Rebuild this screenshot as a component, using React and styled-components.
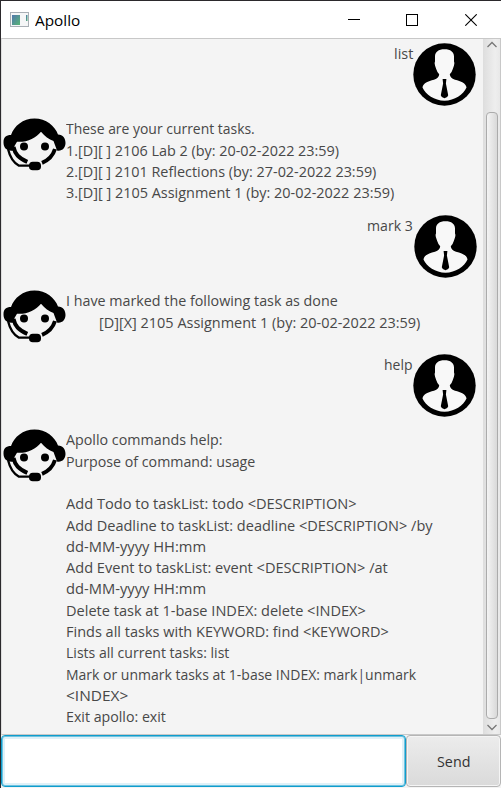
import React, { useLayoutEffect, useRef } from 'react';
import styled, { createGlobalStyle } from 'styled-components';

const Global = createGlobalStyle`
  * { box-sizing: border-box; }
  body { margin: 0; background: #fff; overflow: hidden; }
`;

const Window = styled.main`
  width: 501px;
  height: 788px;
  display: flex;
  flex-direction: column;
  border-top: 1px solid #2b292c;
  border-left: 1px solid #2b292c;
  background: #f4f4f4;
  font-family: 'Open Sans', 'Noto Sans', sans-serif;
  font-size: 15.2px;
  color: #484848;
`;

const TitleBar = styled.header`
  height: 37px;
  flex: none;
  display: flex;
  align-items: center;
  padding-left: 9px;
  background: #fff;
  color: #000;
`;

const AppIcon = styled.svg`
  width: 20px;
  height: 16px;
  flex: none;
  margin-right: 5px;
`;

const Title = styled.h1`
  margin: 0;
  flex: 1;
  font-size: 15px;
  font-weight: 400;
  line-height: 20px;
`;

const WindowButton = styled.button`
  width: 58px;
  height: 37px;
  padding: 0;
  border: 0;
  background: none;
  display: grid;
  place-items: center;

  &:last-child { margin-left: 1px; }
`;

const Controls = styled.div`
  display: flex;
  margin-right: 1px;
`;

const Body = styled.section`
  height: 697px;
  flex: none;
  display: flex;
  border: 1px solid #c8c8c8;
  border-left-color: #dedede;
`;

const Messages = styled.div`
  flex: 1;
  padding-top: 4px;
  min-width: 0;
`;

const Message = styled.article`
  display: flex;
  align-items: flex-start;
  height: ${(p) => p.$height}px;
  padding-left: 1px;
  padding-right: ${(p) => p.$inset || 7}px;
  justify-content: ${(p) => (p.$user ? 'flex-end' : 'flex-start')};
`;

const Lines = styled.div`
  display: flex;
  flex-direction: column;
  padding-top: 0.4px;
  margin-right: ${(p) => p.$gap || 0}px;
`;

const Line = styled.div`
  height: 21.3px;
  line-height: 21.3px;
  margin-left: ${(p) => p.$indent || 0}px;
  white-space: pre;
`;

const Fitted = styled.span`
  display: inline-block;
  width: ${(p) => p.$width}px;
  text-align: left;
  white-space: pre;
`;

const Glyphs = styled.span`
  display: inline-block;
  transform-origin: left center;
`;

const Avatar = styled.svg`
  width: 63px;
  height: 63px;
  flex: none;
  display: block;
`;

const ScrollBar = styled.div`
  width: 17px;
  flex: none;
  display: flex;
  flex-direction: column;
  align-items: center;
  border-left: 1px solid #dedede;
  background: linear-gradient(to right, #dfdfdf, #eee 70%, #e8e8e8);
`;

const ScrollArrow = styled.svg`
  width: 12px;
  height: 14px;
  flex: none;
`;

const Track = styled.div`
  flex: 1;
  width: 12px;
  padding-top: 59px;
  padding-bottom: 1px;
`;

const Thumb = styled.div`
  height: 100%;
  border: 1px solid #ababab;
  border-radius: 4px;
  background: linear-gradient(to right, #f4f4f4, #e9e9e9 40%, #d9d9d9);
`;

const InputBar = styled.footer`
  flex: 1;
  display: flex;
`;

const CommandInput = styled.input`
  width: 405px;
  height: 52px;
  border: 1.5px solid #0f9dcd;
  border-radius: 4px;
  outline: none;
  background: #fff;
  box-shadow: inset 0 0 0 1px #6fc3e0, inset 0 0 0 3px #dff1f8;
  padding: 0 10px;
  font: inherit;
`;

const SendButton = styled.button`
  width: 95px;
  height: 52px;
  padding: 0;
  border: 1px solid #b5b5b5;
  border-radius: 4px;
  box-shadow: inset 0 0 0 1px #f5f5f5;
  background: linear-gradient(#ececec, #dadada);
  color: #333;
  font: inherit;
  display: grid;
  place-items: center;
`;

/* Condenses a line of text so that it spans the given width. */
function FittedText({ text, width }) {
  const ref = useRef(null);
  useLayoutEffect(() => {
    const node = ref.current;
    const fit = () => {
      node.style.transform = `scaleX(${width / node.offsetWidth})`;
    };
    fit();
    document.fonts.ready.then(fit);
  }, [text, width]);
  return (
    <Fitted $width={width}>
      <Glyphs ref={ref}>{text}</Glyphs>
    </Fitted>
  );
}

function UserAvatar() {
  return (
    <Avatar viewBox="0 0 63 63" aria-label="User">
      <circle cx="31.5" cy="31.5" r="31.2" fill="#000" />
      <path
        fill="#f8f8f8"
        d="M31.5 6.3C25.5 6.3 22 9 22 13.5V18.5Q21.2 19.5 22 22.5L23.2 26Q24.2 29.5 26.2 31.2C26 34 24.5 35.5 21 36.7C15 38.3 10 40 9.5 44.5C12.5 51.5 21.5 57.7 31.5 57.7S50.5 51.5 53.5 44.5C53 40 48 38.3 42 36.7C38.5 35.5 37 34 36.8 31.2Q38.8 29.5 39.8 26L41 22.5Q41.8 19.5 41 18.5V13.5C41 9 37.5 6.3 31.5 6.3Z"
      />
      <path fill="#000" d="M29.6 36H33.4L32.9 40.5L35.2 52.2Q34.5 55 31.5 55.3Q28.5 55 27.8 52.2L30.1 40.5Z" />
    </Avatar>
  );
}

function AgentAvatar() {
  return (
    <Avatar viewBox="0 0 63 63" aria-label="Apollo">
      <path
        d="M8 17C11 8 20 .5 31.5 .5S52 8 55 16.5C60 17 62.5 20 62.5 25S59 33.5 54 32.5L50.5 23C46 21.5 41.5 18 38 13.7C33 20 24 24.5 14 23.8L11.5 28L10.5 32.5C4 33.5 .5 30 .5 24.5S3 17 8 17Z"
      />
      <g fill="none" stroke="#000">
        <path strokeWidth="4" d="M10.5 29C12 36 15.5 40 24.3 43.8M52 31C50 37.5 46 42 39 44.8" />
        <path strokeWidth="2.3" d="M5 31C7 39.5 11 45 16 47.7H27" />
      </g>
      <circle cx="21" cy="28.6" r="4" />
      <circle cx="42" cy="28.6" r="4" />
      <rect x="26" y="43.7" width="12" height="8.5" rx="3.8" />
    </Avatar>
  );
}

const conversation = [
  { user: true, height: 75, lines: [['list', 19]] },
  {
    height: 97,
    lines: [
      ['These are your current tasks.', 189],
      ['1.[D][ ] 2106 Lab 2 (by: 20-02-2022 23:59)', 273],
      ['2.[D][ ] 2101 Reflections (by: 27-02-2022 23:59)', 310],
      ['3.[D][ ] 2105 Assignment 1 (by: 20-02-2022 23:59)', 328],
    ],
  },
  { user: true, height: 75, inset: 6, gap: 1.5, lines: [['mark 3', 45.5]] },
  {
    height: 64,
    lines: [
      ['I have marked the following task as done', 272],
      ['[D][X] 2105 Assignment 1 (by: 20-02-2022 23:59)', 321, 33],
    ],
  },
  { user: true, height: 75, gap: 0.5, lines: [['help', 28.5]] },
  {
    height: 300,
    lines: [
      ['Apollo commands help:', 157],
      ['Purpose of command: usage', 189],
      ['', 0],
      ['Add Todo to taskList: todo <DESCRIPTION>', 290.5],
      ['Add Deadline to taskList: deadline <DESCRIPTION> /by', 367],
      ['dd-MM-yyyy HH:mm', 140.5],
      ['Add Event to taskList: event <DESCRIPTION> /at', 321.5],
      ['dd-MM-yyyy HH:mm', 140.5],
      ['Delete task at 1-base INDEX: delete <INDEX>', 300],
      ['Finds all tasks with KEYWORD: find <KEYWORD>', 323],
      ['Lists all current tasks: list', 163],
      ['Mark or unmark tasks at 1-base INDEX: mark|unmark', 350],
      ['<INDEX>', 62],
      ['Exit apollo: exit', 100],
    ],
  },
];

export default function App() {
  return (
    <Window>
      <Global />
      <TitleBar>
        <AppIcon viewBox="0 0 20 16">
          <defs>
            <linearGradient id="pane" x2="1" y2="1">
              <stop stopColor="#5177ad" />
              <stop offset="1" stopColor="#57b575" />
            </linearGradient>
          </defs>
          <rect x=".5" y=".5" width="18" height="14" fill="#f5f6f7" stroke="#a9afb5" />
          <rect x="2" y="3" width="8" height="10" fill="url(#pane)" />
          <rect x="16" y="3" width="1.5" height="6" fill="url(#pane)" />
        </AppIcon>
        <Title><FittedText text="Apollo" width={45} /></Title>
        <Controls>
          <WindowButton aria-label="Minimize">
            <svg width="12" height="12" shapeRendering="crispEdges"><path d="M0 5.5H12" stroke="#000" /></svg>
          </WindowButton>
          <WindowButton aria-label="Maximize">
            <svg width="12" height="12"><rect x=".5" y=".5" width="11" height="11" fill="none" stroke="#000" /></svg>
          </WindowButton>
          <WindowButton aria-label="Close">
            <svg width="12" height="12"><path d="M.3 .3L11.7 11.7M11.7 .3L.3 11.7" stroke="#000" strokeWidth="1.1" /></svg>
          </WindowButton>
        </Controls>
      </TitleBar>
      <Body>
        <Messages>
          {conversation.map((m, i) => (
            <Message key={i} $user={m.user} $height={m.height} $inset={m.inset}>
              {!m.user && <AgentAvatar />}
              <Lines $gap={m.gap}>
                {m.lines.map(([text, width, indent], j) => (
                  <Line key={j} $indent={indent}>
                    {text && <FittedText text={text} width={width} />}
                  </Line>
                ))}
              </Lines>
              {m.user && <UserAvatar />}
            </Message>
          ))}
        </Messages>
        <ScrollBar>
          <ScrollArrow viewBox="0 0 12 14"><path d="M1.5 8L6 3.5L10.5 8" fill="none" stroke="#777" strokeWidth="1.3" /></ScrollArrow>
          <Track><Thumb /></Track>
          <ScrollArrow viewBox="0 0 12 14"><path d="M1.5 5L6 9.5L10.5 5" fill="none" stroke="#777" strokeWidth="1.3" /></ScrollArrow>
        </ScrollBar>
      </Body>
      <InputBar>
        <CommandInput aria-label="Command" />
        <SendButton><FittedText text="Send" width={33} /></SendButton>
      </InputBar>
    </Window>
  );
}
